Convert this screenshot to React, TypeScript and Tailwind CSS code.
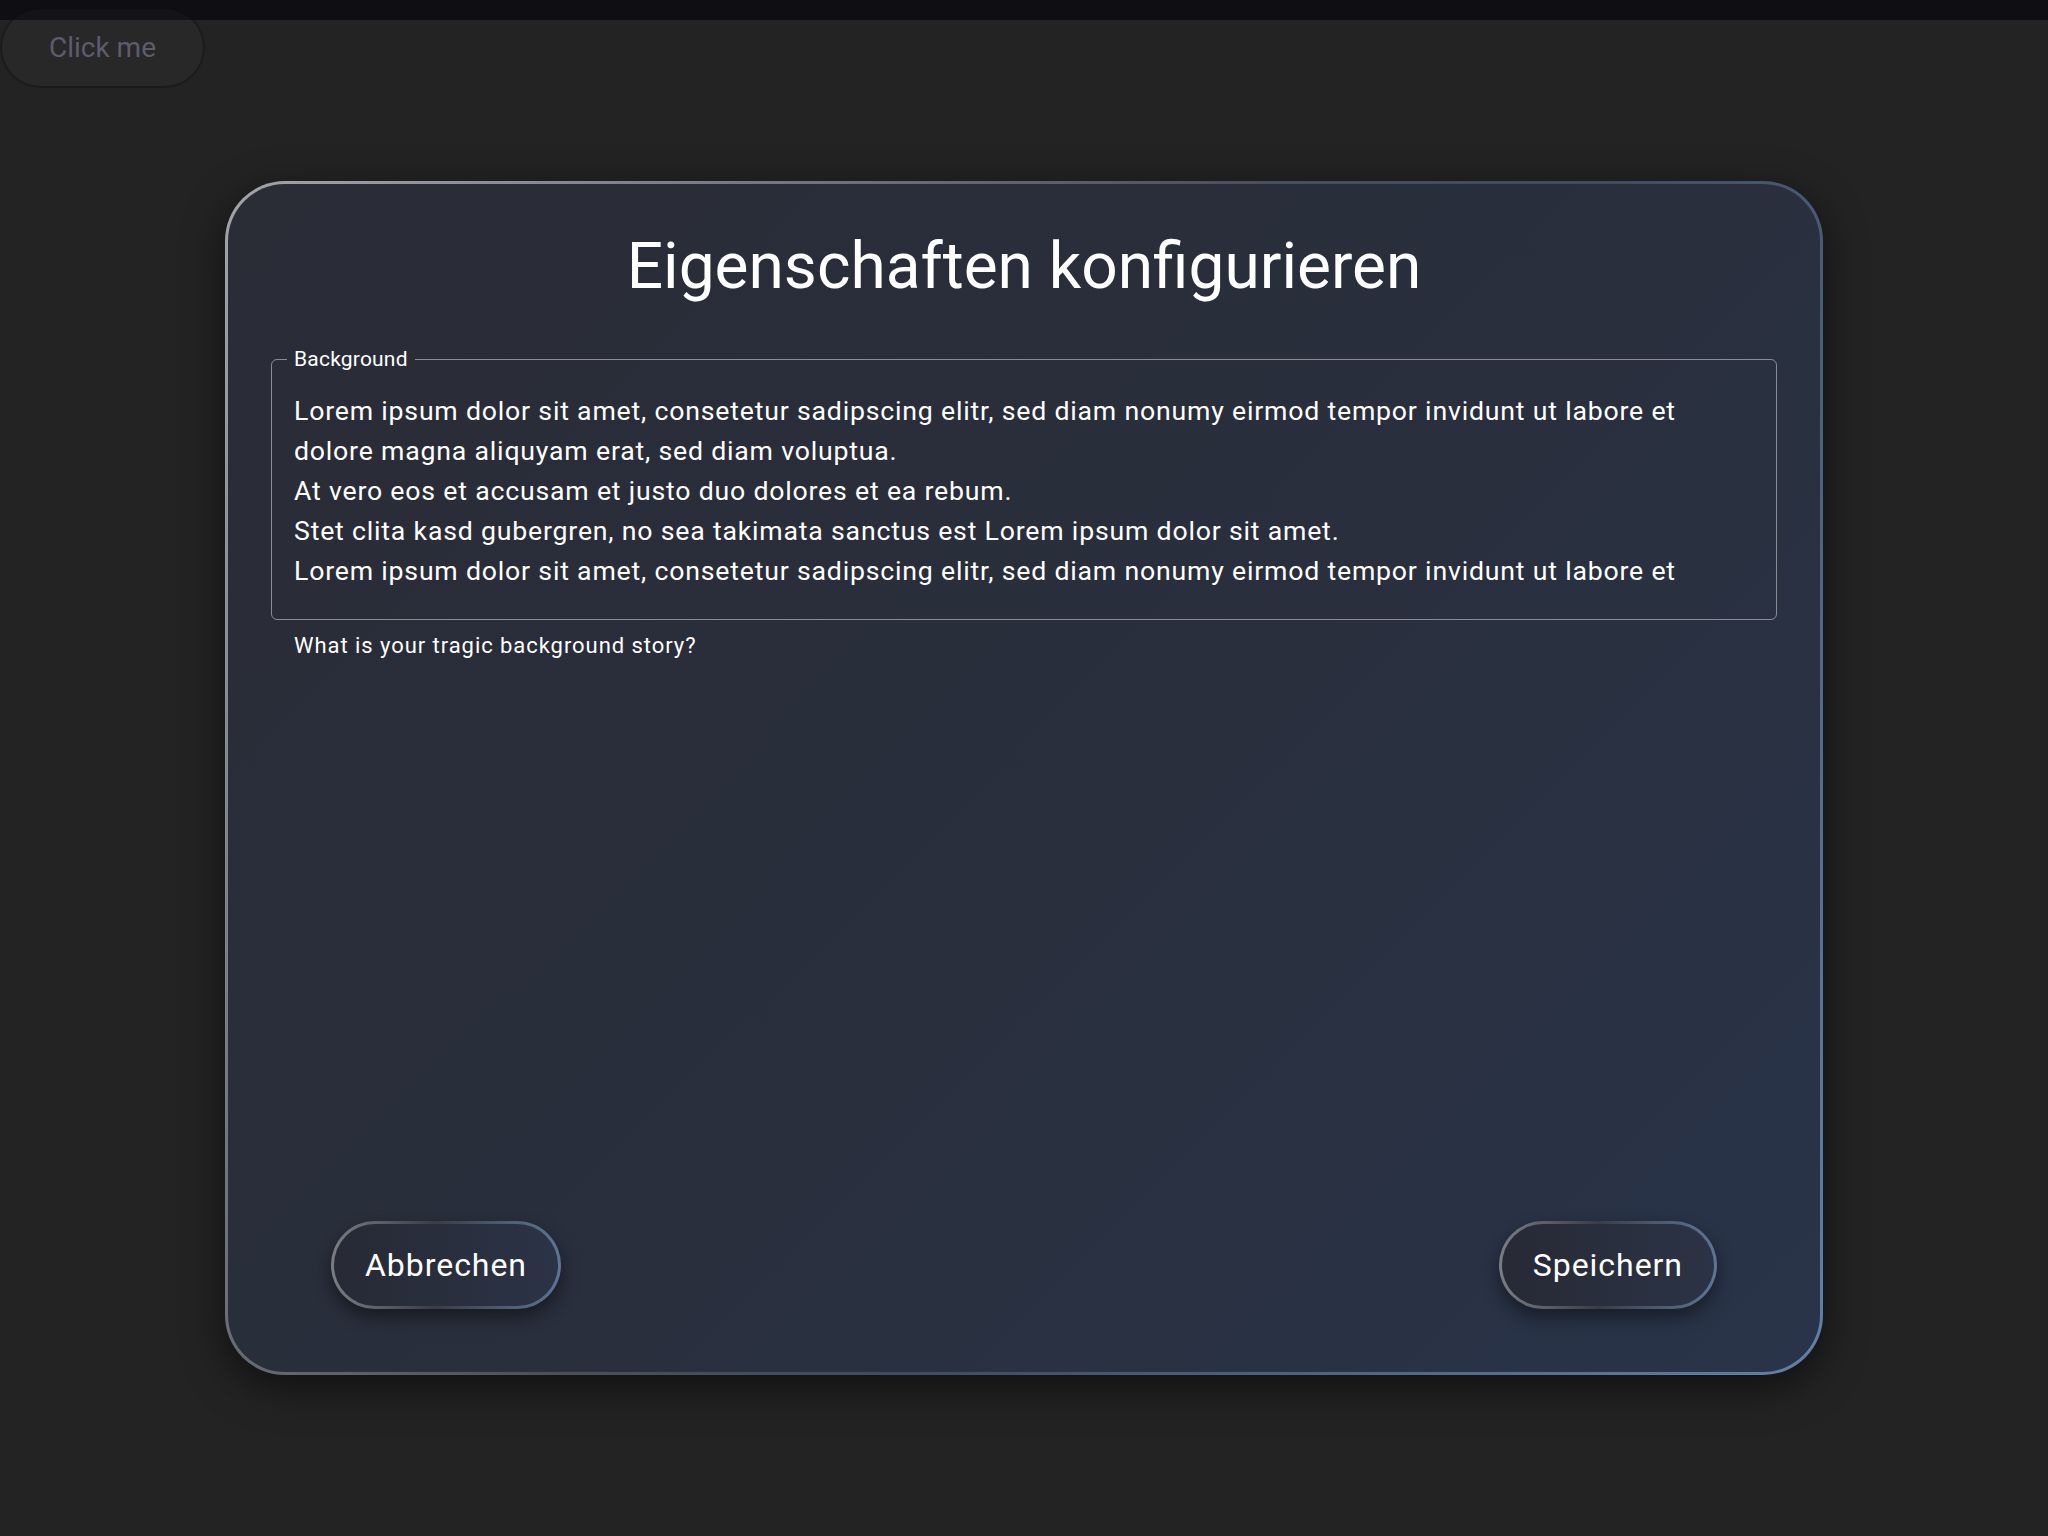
import React from "react";

const FONT = "font-['Roboto','Liberation_Sans',sans-serif]";

const STORY =
  "Lorem ipsum dolor sit amet, consetetur sadipscing elitr, sed diam nonumy eirmod tempor invidunt ut labore et dolore magna aliquyam erat, sed diam voluptua.\n" +
  "At vero eos et accusam et justo duo dolores et ea rebum.\n" +
  "Stet clita kasd gubergren, no sea takimata sanctus est Lorem ipsum dolor sit amet.\n" +
  "Lorem ipsum dolor sit amet, consetetur sadipscing elitr, sed diam nonumy eirmod tempor invidunt ut labore et";

function PillButton({ label }: { label: string }) {
  return (
    <div className="rounded-full p-[3px] bg-[linear-gradient(90deg,#7a7d83_0%,#3a3d46_45%,#5d7596_100%)] shadow-[0_8px_18px_rgba(0,0,0,0.45)]">
      <button className="h-[82px] px-[31px] rounded-full flex items-center justify-center bg-[linear-gradient(90deg,#272a35_0%,#2b3346_100%)] text-white text-[32px] tracking-[0.03em] leading-none">
        {label}
      </button>
    </div>
  );
}

export default function App() {
  return (
    <div className={`relative min-h-screen bg-[#0f0e13] pt-[20px] ${FONT}`}>
      {/* trigger button sits over the top strip */}
      <button className="absolute left-0 top-[7px] w-[205px] h-[81px] rounded-full border-2 border-black/30 bg-white/[0.025] text-[28px] text-[#5e5b6c] z-10">
        Click me
      </button>

      <div className="h-[1516px] bg-[#232323] flex items-center justify-center">
        {/* Dialog */}
        <div className="w-[1598px] h-[1194px] rounded-[60px] p-[3px] bg-[linear-gradient(120deg,#a2a4a8_0%,#4a4f5b_45%,#3f4c62_60%,#6280a6_100%)] shadow-[0_12px_40px_rgba(0,0,0,0.55)]">
          <div className="w-full h-full rounded-[57px] bg-[linear-gradient(135deg,#2a2c36_0%,#292f3d_55%,#29344a_100%)] flex flex-col">
            <h1 className="pt-[44px] text-center text-white text-[64px] leading-[77px] font-normal">
              Eigenschaften konfigurieren
            </h1>

            <div className="mx-[43px] mt-[42px]">
              <fieldset className="border border-[#8b8a95] rounded-[6px] pl-[22px] pr-[40px] pt-[20px] pb-[28px]">
                <legend className="-ml-[7px] px-[7px] text-white text-[21px] leading-[24px] tracking-[0.01em]">
                  Background
                </legend>
                <div className="h-[200px] whitespace-pre-wrap text-white text-[26.67px] leading-[40px] tracking-[0.03em]">
                  {STORY}
                </div>
              </fieldset>
              <p className="mt-[8px] ml-[23px] text-white text-[22px] leading-[35px] tracking-[0.043em]">
                What is your tragic background story?
              </p>
            </div>

            <div className="mt-auto pb-[63px] px-[103px] flex items-center justify-between">
              <PillButton label="Abbrechen" />
              <PillButton label="Speichern" />
            </div>
          </div>
        </div>
      </div>
    </div>
  );
}
